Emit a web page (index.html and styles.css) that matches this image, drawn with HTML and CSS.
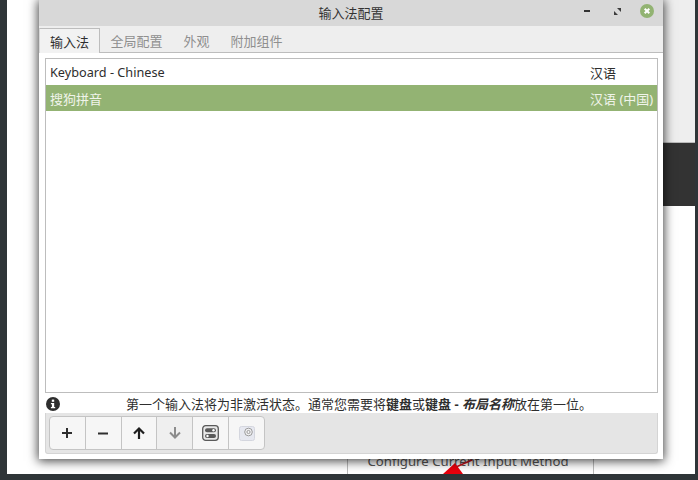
FILE: index.html
```html
<!DOCTYPE html>
<html lang="zh-CN">

<head>
  <meta charset="UTF-8">
  <title>输入法配置</title>
  <link rel="stylesheet" href="styles.css">
</head>

<body>
  <div class="page">
    <div class="side">
      <div class="side-top"></div>
      <div class="side-band"></div>
    </div>
    <div class="doc-row">Configure Current Input Method</div>
    <svg class="arrow" width="60" height="24" viewBox="0 0 60 24">
      <path d="M26 17 L42 10" stroke="#c4101c" stroke-width="1.6"/>
      <path d="M13 24 L25 13 L33 24 Z" fill="#e8000d"/>
    </svg>
  </div>

  <div class="window">
    <div class="titlebar">
      <span class="title">输入法配置</span>
      <div class="win-buttons">
        <span class="win-min"></span>
        <svg class="win-max" width="7" height="7" viewBox="0 0 7 7">
          <path d="M3 0 H7 V4 Z M0 3 L4 7 H0 Z" fill="#3c3c3c"/>
        </svg>
        <svg class="win-close" width="14" height="14" viewBox="0 0 14 14">
          <circle cx="7" cy="7" r="7" fill="#92b372"/>
          <path d="M4.7 4.7 L9.3 9.3 M9.3 4.7 L4.7 9.3" stroke="#fff" stroke-width="2"/>
        </svg>
      </div>
    </div>

    <div class="tabs">
      <div class="tab active">输入法</div>
      <div class="tab">全局配置</div>
      <div class="tab">外观</div>
      <div class="tab">附加组件</div>
    </div>

    <div class="pane">
      <div class="list">
        <div class="row">
          <span class="latin">Keyboard - Chinese</span>
          <span class="lang">汉语</span>
        </div>
        <div class="row selected">
          <span>搜狗拼音</span>
          <span class="lang">汉语 (中国)</span>
        </div>
      </div>

      <div class="info">
        <svg class="info-icon" width="14" height="14" viewBox="0 0 14 14">
          <circle cx="7" cy="7" r="7" fill="#2e2e2e"/>
          <rect x="5.8" y="2.6" width="2.4" height="2.2" fill="#fff"/>
          <path d="M4.9 6 H8.2 V10 H9.2 V11.3 H4.9 V10 H5.9 V7.3 H4.9 Z" fill="#fff"/>
        </svg>
        <p>第一个输入法将为非激活状态。通常您需要将<b>键盘</b>或<b>键盘 - <i>布局名称</i></b>放在第一位。</p>
      </div>

      <div class="toolbar">
        <div class="btn-group">
          <div class="btn">
            <svg width="14" height="14" viewBox="0 0 14 14"><path d="M7 2 V12 M2 7 H12" stroke="#2e2e2e" stroke-width="2"/></svg>
          </div>
          <div class="btn">
            <svg width="14" height="14" viewBox="0 0 14 14"><path d="M2 7.5 H12" stroke="#2e2e2e" stroke-width="2"/></svg>
          </div>
          <div class="btn">
            <svg width="14" height="14" viewBox="0 0 14 14"><path d="M7 13 V3 M2 7.5 L7 2.5 L12 7.5" fill="none" stroke="#1e1e1e" stroke-width="2.2"/></svg>
          </div>
          <div class="btn off">
            <svg width="14" height="14" viewBox="0 0 14 14"><path d="M7 1 V11 M2 6.5 L7 11.5 L12 6.5" fill="none" stroke="#8c8c8c" stroke-width="2"/></svg>
          </div>
          <div class="btn">
            <svg width="17" height="16" viewBox="0 0 17 16">
              <rect x="0.7" y="0.7" width="15.6" height="14.6" rx="3" fill="#e8e8e8" stroke="#5a5a5a" stroke-width="1.3"/>
              <rect x="3" y="3.2" width="11" height="4" rx="2" fill="#5a5a5a"/>
              <circle cx="11.5" cy="5.2" r="1.2" fill="#fff"/>
              <rect x="3" y="9" width="11" height="4" rx="2" fill="#5a5a5a"/>
              <circle cx="5.5" cy="11" r="1.2" fill="#fff"/>
            </svg>
          </div>
          <div class="btn">
            <svg width="16" height="15" viewBox="0 0 16 15">
              <rect x="0.5" y="0.5" width="15" height="14" rx="2" fill="#e6e8f0" stroke="#d4d6de"/>
              <circle cx="9.5" cy="6" r="3.8" fill="#f4f4f6" stroke="#9a9a9a"/>
              <circle cx="9.5" cy="6" r="1.6" fill="none" stroke="#9a9a9a"/>
            </svg>
          </div>
        </div>
      </div>
    </div>
  </div>
</body>

</html>
```

FILE: styles.css
```css
html, body {
  margin: 0;
  padding: 0;
}

body {
  width: 698px;
  height: 480px;
  overflow: hidden;
  background-color: #2f3538;
  font-family: "Noto Sans", "Noto Sans CJK SC", sans-serif;
  font-size: 13px;
  color: #2e2e2e;
}

/* page behind the dialog */
.page {
  position: relative;
  width: 688px;
  height: 474px;
  margin-left: 7px;
  display: flex;
  justify-content: flex-end;
  background-color: #fff;
  overflow: hidden;
}

.side {
  width: 60px;
}

.side-top {
  height: 142px;
  background-color: #eee;
  border-bottom: 1px solid #bbb;
}

.side-band {
  height: 63px;
  background-color: #333;
}

.doc-row {
  position: absolute;
  top: 450px;
  left: 340px;
  width: 247px;
  height: 24px;
  padding: 1px 5px 0 0;
  box-sizing: border-box;
  border-left: 1px solid #bbb;
  border-right: 1px solid #bbb;
  text-align: center;
  font-size: 13.2px;
  line-height: 20px;
  color: #555;
  white-space: nowrap;
}

.arrow {
  position: absolute;
  top: 450px;
  left: 423px;
}

/* dialog */
.window {
  position: absolute;
  top: 0;
  left: 39px;
  width: 624px;
  height: 459px;
  display: flex;
  flex-direction: column;
  background-color: #fff;
  box-shadow: 0 1px 10px 1px rgba(0, 0, 0, 0.75);
}

.titlebar {
  position: relative;
  flex: none;
  height: 26px;
  padding-bottom: 1px;
  box-sizing: border-box;
  display: flex;
  align-items: center;
  justify-content: center;
  background-color: #d8d8d8;
}

.title {
  font-size: 13px;
  color: #333;
}

.win-buttons {
  position: absolute;
  top: 4px;
  right: 9px;
  display: flex;
  align-items: center;
  height: 14px;
}

.win-min {
  width: 6px;
  height: 2px;
  background-color: #333;
}

.win-max {
  margin: 0 19px 0 24px;
}

.tabs {
  flex: none;
  height: 27px;
  box-sizing: border-box;
  display: flex;
  align-items: flex-end;
  background-color: #eee;
  border-bottom: 1px solid #bdbdbd;
}

.tab {
  height: 24px;
  padding: 0 10.5px;
  font-size: 13px;
  line-height: 27px;
  color: #8f8f8f;
}

.tab.active {
  height: 25px;
  margin-bottom: -1px;
  padding: 0 10px;
  box-sizing: border-box;
  border: 1px solid #bdbdbd;
  border-bottom: none;
  border-left-color: #d8d8d8;
  background-color: #f2f2f2;
  color: #2e2e2e;
}

.pane {
  flex: 1;
  display: flex;
  flex-direction: column;
  padding: 5px 5px 5px 6px;
}

.list {
  flex: 1;
  border: 1px solid #bdbdbd;
}

.row {
  height: 26px;
  display: flex;
  align-items: center;
  justify-content: space-between;
  padding: 0 5px 0 4px;
}

.row .latin {
  font-size: 12.7px;
}

.row .lang {
  width: 62px;
  white-space: nowrap;
}

.row.selected {
  background-color: #93b373;
  color: #f0f4ea;
}

.info {
  flex: none;
  height: 20px;
  display: flex;
  align-items: center;
}

.info-icon {
  flex: none;
  margin: 1px 0 0 1px;
}

.info p {
  flex: 1;
  margin: 0;
  text-align: center;
  white-space: nowrap;
}

.toolbar {
  flex: none;
  height: 41px;
  box-sizing: border-box;
  padding: 3px 3px;
  background-color: #e5e5e5;
  border: 1px solid #d4d4d4;
  border-top: none;
  border-radius: 0 0 3px 3px;
}

.btn-group {
  display: flex;
  width: 216px;
  height: 34px;
  box-sizing: border-box;
  border: 1px solid #c4c4c4;
  border-radius: 4px;
  background-color: #f6f6f6;
}

.btn {
  flex: 1;
  display: flex;
  align-items: center;
  justify-content: center;
  border-right: 1px solid #c4c4c4;
}

.btn:last-child {
  border-right: none;
}

.btn.off {
  background-color: #efefef;
}
```
